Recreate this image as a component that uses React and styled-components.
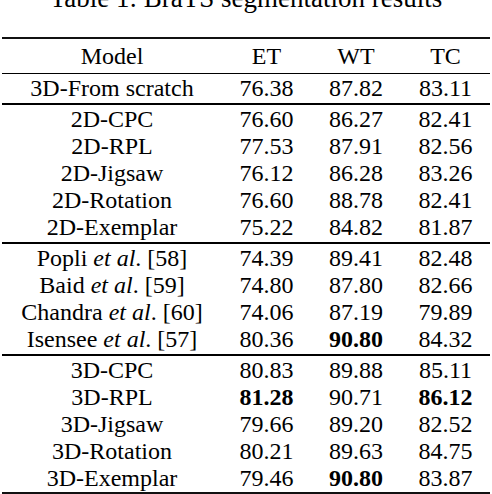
import React from 'react';
import styled, { createGlobalStyle } from 'styled-components';

const GlobalStyle = createGlobalStyle`
  html, body {
    margin: 0;
    padding: 0;
    background: #fff;
  }
  body {
    width: 492px;
    height: 494px;
    overflow: hidden;
  }
`;

const Page = styled.div`
  width: 492px;
  font-family: "Liberation Serif", "Times New Roman", serif;
  color: #000;
`;

// only the bottom of the caption is visible in the shot
const Caption = styled.div`
  margin-top: -15px;
  height: 27px;
  font-size: 27px;
  line-height: 1;
  text-align: center;
  white-space: nowrap;
`;

const Table = styled.div`
  margin: 25px 0 0 2px;
  width: 488px;
  display: grid;
  grid-template-columns: 220px 89px 90px 89px;
  font-size: 24px;
`;

const Rule = styled.div`
  grid-column: 1 / -1;
  height: ${p => (p.$heavy ? 2 : 1)}px;
  background: ${p => (p.$heavy ? '#111' : '#000')};
  margin: ${p => p.$above}px 0 ${p => p.$below}px;
`;

const Cell = styled.div`
  height: ${p => (p.$head ? 34 : 27)}px;
  line-height: ${p => (p.$head ? 34 : 27)}px;
  text-align: center;
  white-space: nowrap;
  font-weight: ${p => (p.$bold ? 700 : 400)};
`;

const groups = [
  [['3D-From scratch', '76.38', '87.82', '83.11']],
  [
    ['2D-CPC', '76.60', '86.27', '82.41'],
    ['2D-RPL', '77.53', '87.91', '82.56'],
    ['2D-Jigsaw', '76.12', '86.28', '83.26'],
    ['2D-Rotation', '76.60', '88.78', '82.41'],
    ['2D-Exemplar', '75.22', '84.82', '81.87'],
  ],
  [
    [['Popli', '[58]'], '74.39', '89.41', '82.48'],
    [['Baid', '[59]'], '74.80', '87.80', '82.66'],
    [['Chandra', '[60]'], '74.06', '87.19', '79.89'],
    [['Isensee', '[57]'], '80.36', '*90.80', '84.32'],
  ],
  [
    ['3D-CPC', '80.83', '89.88', '85.11'],
    ['3D-RPL', '*81.28', '90.71', '*86.12'],
    ['3D-Jigsaw', '79.66', '89.20', '82.52'],
    ['3D-Rotation', '80.21', '89.63', '84.75'],
    ['3D-Exemplar', '79.46', '*90.80', '83.87'],
  ],
];

function ModelName({ value }) {
  if (!Array.isArray(value)) return value;
  return (
    <>
      {value[0]} <i>et al</i>. {value[1]}
    </>
  );
}

export default function App() {
  return (
    <>
      <GlobalStyle />
      <Page>
        <Caption>Table 1: BraTS segmentation results</Caption>
        <Table>
          <Rule $heavy $above={0} $below={0} />
          <Cell $head>Model</Cell>
          <Cell $head>ET</Cell>
          <Cell $head>WT</Cell>
          <Cell $head>TC</Cell>
          {groups.map((rows, gi) => (
            <React.Fragment key={gi}>
              <Rule $above={0} $below={1} />
              {rows.map((row, ri) => (
                <React.Fragment key={ri}>
                  <Cell><ModelName value={row[0]} /></Cell>
                  {row.slice(1).map((v, ci) => (
                    <Cell key={ci} $bold={v.startsWith('*')}>
                      {v.replace('*', '')}
                    </Cell>
                  ))}
                </React.Fragment>
              ))}
              {gi < groups.length - 1 && <Rule $above={1} $below={0} />}
            </React.Fragment>
          ))}
          <Rule $heavy $above={0} $below={0} />
        </Table>
      </Page>
    </>
  );
}
